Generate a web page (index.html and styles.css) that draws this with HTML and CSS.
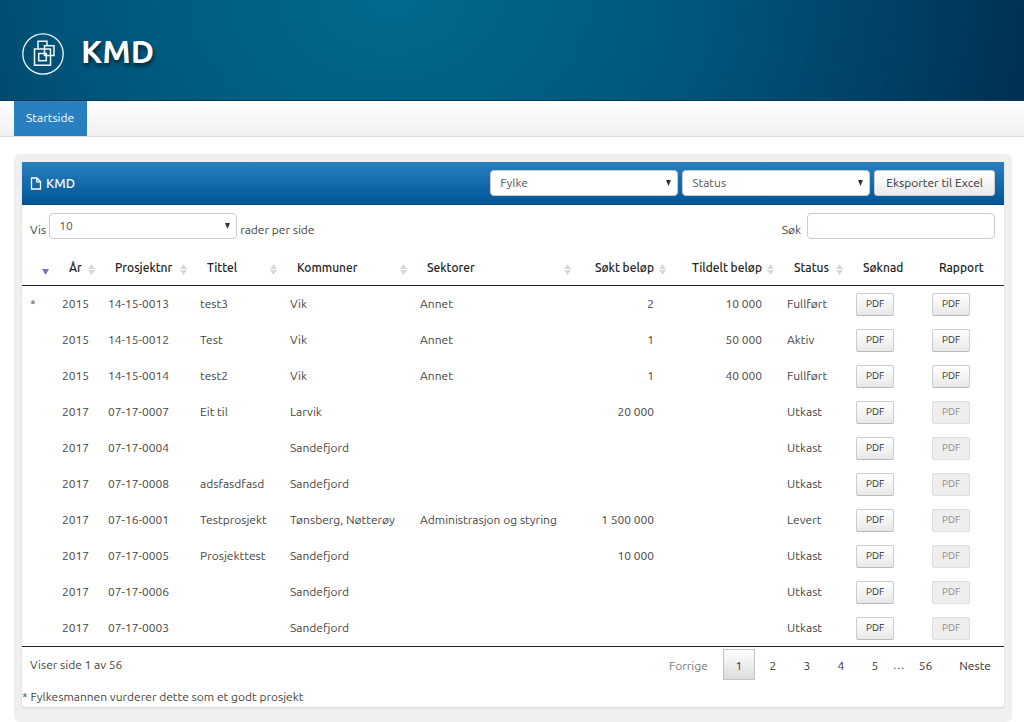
FILE: index.html
```html
<!DOCTYPE html>
<html lang="no">
<head>
<meta charset="utf-8">
<meta name="viewport" content="width=device-width, initial-scale=1">
<title>KMD</title>
<link rel="stylesheet" href="styles.css">
</head>
<body>
<header class="site-header">
  <svg class="logo" viewBox="0 0 42 42" width="42" height="42" fill="none" stroke="#eef9ff" aria-hidden="true">
    <circle cx="21" cy="21" r="20.200" stroke-width="1.3"/>
    <g stroke-width="1.5">
      <path d="M16 15.800V8.300H25V12.500"/>
      <rect x="12.500" y="16" width="16" height="16.200"/>
      <rect x="22.500" y="12.700" width="9.500" height="9.800"/>
      <rect x="16.700" y="20.500" width="7.600" height="7.200"/>
    </g>
  </svg>
  <h1 class="site-title">KMD</h1>
</header>
<nav class="site-nav"><a class="nav-tab" href="#">Startside</a></nav>
<main class="frame">
  <section class="panel">
    <div class="panel-header">
      <svg class="file-icon" viewBox="0 0 12 13" width="12" height="13" fill="none" stroke="#fff" stroke-width="1.3" aria-hidden="true"><path d="M1.500 1H7L10.500 4.500V12H1.500ZM6.800 1V4.800H10.500"/></svg>
      <h2 class="panel-title">KMD</h2>
      <select class="field select" aria-label="Fylke"><option>Fylke</option></select>
      <select class="field select" aria-label="Status"><option>Status</option></select>
      <button class="button" type="button">Eksporter til Excel</button>
    </div>
    <div class="controls">
      <label class="control">Vis <select class="field select"><option>10</option></select> rader per side</label>
      <label class="control control-search">Søk <input class="field" type="search"></label>
    </div>
    <table class="projects">
      <colgroup><col class="c-mark"><col class="c-year"><col class="c-number"><col class="c-title"><col class="c-town"><col class="c-sector"><col class="c-applied"><col class="c-granted"><col class="c-status"><col class="c-application"><col class="c-report"></colgroup>
      <thead><tr>
        <th class="sorted" aria-label="Merket"></th><th class="sortable">År</th><th class="sortable">Prosjektnr</th><th class="sortable">Tittel</th><th class="sortable">Kommuner</th><th class="sortable">Sektorer</th><th class="sortable num">Søkt beløp</th><th class="sortable num">Tildelt beløp</th><th class="sortable">Status</th><th>Søknad</th><th>Rapport</th>
      </tr></thead>
      <tbody>
        <tr><td>*</td><td>2015</td><td>14-15-0013</td><td>test3</td><td>Vik</td><td>Annet</td><td class="num">2</td><td class="num">10 000</td><td>Fullført</td><td><button class="pdf" type="button">PDF</button></td><td><button class="pdf" type="button">PDF</button></td></tr>
        <tr><td></td><td>2015</td><td>14-15-0012</td><td>Test</td><td>Vik</td><td>Annet</td><td class="num">1</td><td class="num">50 000</td><td>Aktiv</td><td><button class="pdf" type="button">PDF</button></td><td><button class="pdf" type="button">PDF</button></td></tr>
        <tr><td></td><td>2015</td><td>14-15-0014</td><td>test2</td><td>Vik</td><td>Annet</td><td class="num">1</td><td class="num">40 000</td><td>Fullført</td><td><button class="pdf" type="button">PDF</button></td><td><button class="pdf" type="button">PDF</button></td></tr>
        <tr><td></td><td>2017</td><td>07-17-0007</td><td>Eit til</td><td>Larvik</td><td></td><td class="num">20 000</td><td></td><td>Utkast</td><td><button class="pdf" type="button">PDF</button></td><td><button class="pdf" type="button" disabled>PDF</button></td></tr>
        <tr><td></td><td>2017</td><td>07-17-0004</td><td></td><td>Sandefjord</td><td></td><td></td><td></td><td>Utkast</td><td><button class="pdf" type="button">PDF</button></td><td><button class="pdf" type="button" disabled>PDF</button></td></tr>
        <tr><td></td><td>2017</td><td>07-17-0008</td><td>adsfasdfasd</td><td>Sandefjord</td><td></td><td></td><td></td><td>Utkast</td><td><button class="pdf" type="button">PDF</button></td><td><button class="pdf" type="button" disabled>PDF</button></td></tr>
        <tr><td></td><td>2017</td><td>07-16-0001</td><td>Testprosjekt</td><td>Tønsberg, Nøtterøy</td><td>Administrasjon og styring</td><td class="num">1 500 000</td><td></td><td>Levert</td><td><button class="pdf" type="button">PDF</button></td><td><button class="pdf" type="button" disabled>PDF</button></td></tr>
        <tr><td></td><td>2017</td><td>07-17-0005</td><td>Prosjekttest</td><td>Sandefjord</td><td></td><td class="num">10 000</td><td></td><td>Utkast</td><td><button class="pdf" type="button">PDF</button></td><td><button class="pdf" type="button" disabled>PDF</button></td></tr>
        <tr><td></td><td>2017</td><td>07-17-0006</td><td></td><td>Sandefjord</td><td></td><td></td><td></td><td>Utkast</td><td><button class="pdf" type="button">PDF</button></td><td><button class="pdf" type="button" disabled>PDF</button></td></tr>
        <tr><td></td><td>2017</td><td>07-17-0003</td><td></td><td>Sandefjord</td><td></td><td></td><td></td><td>Utkast</td><td><button class="pdf" type="button">PDF</button></td><td><button class="pdf" type="button" disabled>PDF</button></td></tr>
      </tbody>
    </table>
    <div class="table-footer">
      <span class="page-info">Viser side 1 av 56</span>
      <nav class="pages" aria-label="Sider">
        <button class="page page-step" type="button" disabled>Forrige</button>
        <button class="page page-current" type="button" aria-current="page">1</button>
        <button class="page" type="button">2</button>
        <button class="page" type="button">3</button>
        <button class="page" type="button">4</button>
        <button class="page" type="button">5</button>
        <span class="dots">…</span>
        <button class="page" type="button">56</button>
        <button class="page page-step" type="button">Neste</button>
      </nav>
    </div>
    <p class="note">* Fylkesmannen vurderer dette som et godt prosjekt</p>
  </section>
</main>
</body>
</html>
```
FILE: styles.css
```css
* { box-sizing: border-box; }
body { margin: 0; background: #fff; color: #444; font-family: Ubuntu, "Noto Sans", sans-serif; font-size: 12px; line-height: 20px; }
button, input, select { font: inherit; color: inherit; }

.site-header { display: flex; align-items: flex-start; gap: 17px; padding: 31px 22px 25px; background: radial-gradient(ellipse 640px 460px at 390px 0, #006a8e 0%, #00557b 50%, #003153 100%); border-bottom: 1px solid #063653; }
.logo { display: block; margin-top: 2px; flex: none; }
.site-title { margin: 0; color: #fff; font-size: 32px; line-height: 41px; font-weight: 600; text-shadow: 1px 3px 4px rgba(0, 0, 0, .6); }

.site-nav { display: flex; padding: 0 14px; background: linear-gradient(#fff, #f0f0f0); border-bottom: 1px solid #ddd; }
.nav-tab { padding: 7px 13px 8px 12px; background: #2980bf; color: #fff; line-height: 20px; text-decoration: none; }

.frame { margin: 17px 12px 0 14px; padding: 8px 8px 15px; background: #efefef; border-radius: 6px; }
.panel { background: #fff; border-radius: 0 0 3px 3px; box-shadow: 0 1px 2px rgba(0, 0, 0, .12); }
.panel-header { display: flex; align-items: center; gap: 4px; padding: 8px 9px 8px 8px; background: linear-gradient(#2a80bf, #005596); border-bottom: 1px solid #004c87; }
.panel-title { flex: 1; margin: 0; color: #fff; font-size: 13px; line-height: 20px; font-weight: 500; }
.field { width: 188px; height: 26px; padding: 0 9px; background: #fff; border: 1px solid #ccc; border-radius: 4px; color: #555; line-height: 24px; outline: 0; }
.select { appearance: none; background: #fff url("data:image/svg+xml,%3Csvg xmlns='http://www.w3.org/2000/svg' width='5' height='6'%3E%3Cpath d='M0 0h5L2.500 6z' fill='%23333'/%3E%3C/svg%3E") no-repeat right 6px center; }
.button { height: 26px; padding: 0 11px; color: #333; background: linear-gradient(#fff, #eaeaea); border: 1px solid #ccc; border-radius: 3px; }

.controls { display: flex; justify-content: space-between; padding: 8px 9px 0 8px; }
.control { display: flex; align-items: flex-start; gap: 3px; line-height: 34px; }
.control-search { gap: 6px; }

.projects { width: 100%; table-layout: fixed; border-collapse: separate; border-spacing: 0; border-bottom: 1px solid #222; }
.c-mark { width: 32px; } .c-year { width: 46px; } .c-number { width: 92px; } .c-title { width: 90px; }
.c-town { width: 130px; } .c-sector { width: 164px; } .c-applied { width: 95px; } .c-granted { width: 108px; }
.c-status { width: 69px; } .c-application { width: 76px; } .c-report { width: 80px; }
th { height: 39px; padding: 4px 17px 0 15px; border-bottom: 1px solid #222; color: #222; font-weight: 500; text-align: left; white-space: nowrap; background-repeat: no-repeat; background-position: right 5px top 17px; }
td { height: 36px; padding: 0 0 0 8px; white-space: nowrap; }
.num { padding-left: 0; padding-right: 17px; text-align: right; }
.sortable { background-image: url("data:image/svg+xml,%3Csvg xmlns='http://www.w3.org/2000/svg' width='7' height='11'%3E%3Cpath d='M0 5L3.500 0L7 5zM0 6L3.500 11L7 6z' fill='%23d8d8d8'/%3E%3C/svg%3E"); }
.sorted { background-image: url("data:image/svg+xml,%3Csvg xmlns='http://www.w3.org/2000/svg' width='7' height='11'%3E%3Cpath d='M0 5L3.500 11L7 5z' fill='%237473d3'/%3E%3C/svg%3E"); }
.pdf { display: block; height: 23px; padding: 0 9px; margin: 0; color: #333; font-size: 10px; line-height: 20px; background: linear-gradient(#fff, #e8e8e8); border: 1px solid #ccc; border-bottom-color: #b8b8b8; border-radius: 2px; }
.pdf:disabled { color: #8c8c8c; background: #eee; border-color: #ddd; }

.table-footer { display: flex; justify-content: space-between; padding: 2px 0 0 8px; line-height: 31px; }
.pages { display: flex; gap: 2px; }
.page { min-width: 32px; height: 31px; padding: 0 9px; background: none; border: 1px solid transparent; color: #333; }
.page:disabled { color: #777; }
.page-current { background: linear-gradient(#fff, #dcdcdc); border-color: #c4c4c4; }
.page-step { padding: 0 12px; }
.dots + .page { padding: 0 11px; }
.note { margin: 0; padding: 7px 0 0; }
```
